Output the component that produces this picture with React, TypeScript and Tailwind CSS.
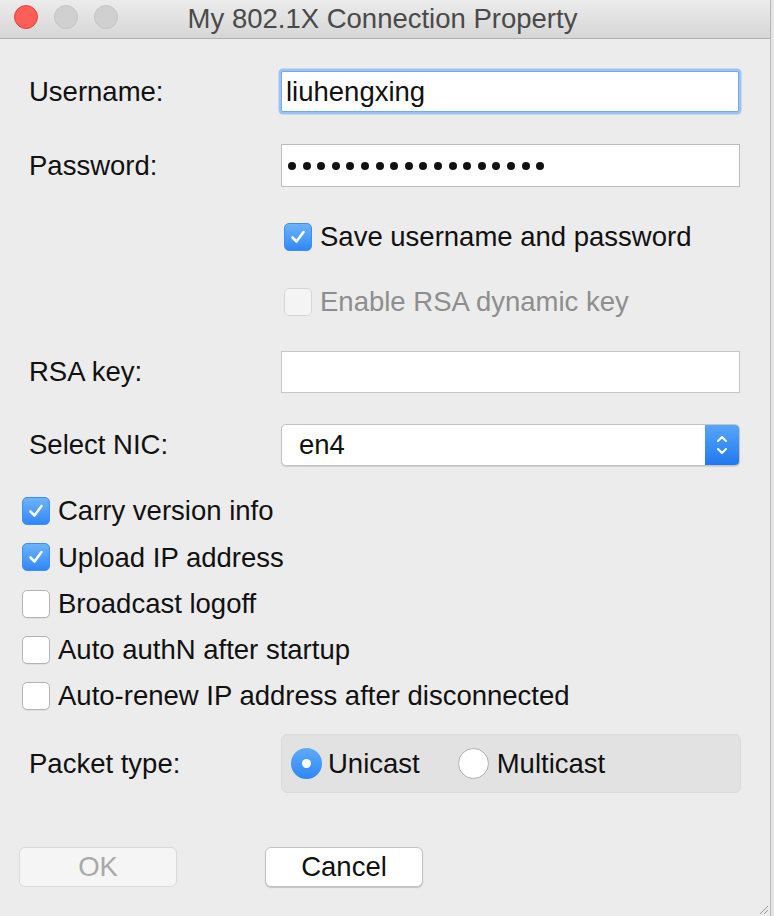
import React from "react";

const font = { fontFamily: '"Liberation Sans", Arial, Helvetica, sans-serif' };

function Check({ checked, disabled }: { checked?: boolean; disabled?: boolean }) {
  if (checked) {
    return (
      <div className="flex h-[28px] w-[28px] shrink-0 items-center justify-center rounded-[5px] bg-gradient-to-b from-[#6db3fb] to-[#2f88f5] border border-[#3a8ff0]">
        <svg width="18" height="18" viewBox="0 0 18 18">
          <path d="M3.5 9.5 L7.5 13.5 L14.5 4" fill="none" stroke="white" strokeWidth="2.6" strokeLinecap="round" strokeLinejoin="round" />
        </svg>
      </div>
    );
  }
  if (disabled) {
    return <div className="h-[28px] w-[28px] shrink-0 rounded-[5px] border border-[#d6d6d6] bg-[#f4f4f4]" />;
  }
  return <div className="h-[28px] w-[28px] shrink-0 rounded-[5px] border border-[#b3b3b3] bg-white shadow-[0_1px_0_rgba(0,0,0,0.05)]" />;
}

function CheckRow({ label, checked }: { label: string; checked?: boolean }) {
  return (
    <div className="flex h-[28px] items-center gap-[8px] pl-[22px]">
      <Check checked={checked} />
      <span className="text-[27.5px] leading-none text-[#111]">{label}</span>
    </div>
  );
}

function Label({ children }: { children: React.ReactNode }) {
  return <div className="w-[281px] shrink-0 pl-[29px] text-[27.5px] leading-none text-[#111]">{children}</div>;
}

export default function App() {
  return (
    <div style={font} className="flex h-[916px] w-[774px] overflow-hidden bg-[#e6e6e6]">
      <div className="relative flex h-[916px] w-[771px] flex-col border-r border-[#b4b4b4] bg-[#ececec]">
        {/* Title bar */}
        <div className="relative flex h-[39px] shrink-0 items-center justify-center border-b border-[#b1b1b1] bg-gradient-to-b from-[#ececec] to-[#d6d6d6]">
          <div className="absolute left-[14px] top-[5px] flex gap-[16px]">
            <div className="h-[24px] w-[24px] rounded-full border border-[#e2463f] bg-[#fc5f57]" />
            <div className="h-[24px] w-[24px] rounded-full border border-[#c4c4c4] bg-[#d0d0d0]" />
            <div className="h-[24px] w-[24px] rounded-full border border-[#c4c4c4] bg-[#d0d0d0]" />
          </div>
          <span className="pr-[5px] text-[27.5px] leading-none text-[#4a4a4a]">My 802.1X Connection Property</span>
        </div>

        {/* Username */}
        <div className="mt-[32px] flex h-[41px] items-center">
          <Label>Username:</Label>
          <div className="flex h-[41px] w-[458px] items-center rounded-[2px] border border-[#78a9e6] bg-white pl-[4px] shadow-[0_0_0_2.5px_#9cc3f1]">
            <span className="text-[27.5px] leading-none text-[#111]">liuhengxing</span>
          </div>
        </div>

        {/* Password */}
        <div className="mt-[32px] flex h-[43px] items-center">
          <Label>Password:</Label>
          <div className="flex h-[43px] w-[459px] items-center gap-[6.6px] border border-[#bcbcbc] bg-white pl-[6px]">
            {Array.from({ length: 18 }).map((_, i) => (
              <span key={i} className="h-[8px] w-[8px] rounded-full bg-[#111]" />
            ))}
          </div>
        </div>

        {/* Save */}
        <div className="mt-[36px] flex h-[28px] items-center gap-[8px] pl-[284px]">
          <Check checked />
          <span className="text-[27.5px] leading-none text-[#111]">Save username and password</span>
        </div>

        {/* Enable RSA */}
        <div className="mt-[37px] flex h-[28px] items-center gap-[8px] pl-[284px]">
          <Check disabled />
          <span className="text-[27.5px] leading-none text-[#8e8e8e]">Enable RSA dynamic key</span>
        </div>

        {/* RSA key */}
        <div className="mt-[35px] flex h-[42px] items-center">
          <Label>RSA key:</Label>
          <div className="h-[42px] w-[459px] border border-[#c6c6c6] bg-white" />
        </div>

        {/* Select NIC */}
        <div className="mt-[31px] flex h-[42px] items-center">
          <Label>Select NIC:</Label>
          <div className="flex h-[42px] w-[459px] overflow-hidden rounded-[5px] border border-[#c3c3c3] bg-white shadow-[0_1px_1px_rgba(0,0,0,0.12)]">
            <div className="flex flex-1 items-center pl-[17px]">
              <span className="text-[27.5px] leading-none text-[#111]">en4</span>
            </div>
            <div className="flex w-[34px] items-center justify-center bg-gradient-to-b from-[#57a6fa] to-[#1f78ef]">
              <svg width="14" height="26" viewBox="0 0 14 26">
                <path d="M3 9 L7 5 L11 9" fill="none" stroke="white" strokeWidth="2" strokeLinecap="round" strokeLinejoin="round" />
                <path d="M3 17 L7 21 L11 17" fill="none" stroke="white" strokeWidth="2" strokeLinecap="round" strokeLinejoin="round" />
              </svg>
            </div>
          </div>
        </div>

        {/* Check list */}
        <div className="mt-[31px] flex flex-col gap-[18.25px]">
          <CheckRow label="Carry version info" checked />
          <CheckRow label="Upload IP address" checked />
          <CheckRow label="Broadcast logoff" />
          <CheckRow label="Auto authN after startup" />
          <CheckRow label="Auto-renew IP address after disconnected" />
        </div>

        {/* Packet type */}
        <div className="mt-[24px] flex h-[59px] items-center">
          <Label>Packet type:</Label>
          <div className="flex h-[59px] w-[460px] items-center rounded-[6px] border border-[#dadada] bg-[#e2e2e2] pl-[9px]">
            <div className="flex items-center gap-[6px]">
              <div className="flex h-[31px] w-[31px] items-center justify-center rounded-full bg-gradient-to-b from-[#5eaafb] to-[#2d87f5]">
                <div className="h-[9px] w-[9px] rounded-full bg-white" />
              </div>
              <span className="text-[27.5px] leading-none text-[#111]">Unicast</span>
            </div>
            <div className="ml-[38px] flex items-center gap-[8px]">
              <div className="h-[31px] w-[31px] rounded-full border border-[#b0b0b0] bg-white" />
              <span className="text-[27.5px] leading-none text-[#111]">Multicast</span>
            </div>
          </div>
        </div>

        {/* Buttons */}
        <div className="mt-[54px] flex h-[40px] items-center pl-[19px]">
          <div className="flex h-[40px] w-[158px] items-center justify-center rounded-[6px] border border-[#d9d9d9] bg-[#f5f5f5]">
            <span className="text-[27.5px] leading-none text-[#a9a9a9]">OK</span>
          </div>
          <div className="ml-[88px] flex h-[40px] w-[158px] items-center justify-center rounded-[6px] border border-[#c2c2c2] bg-white shadow-[0_1px_1px_rgba(0,0,0,0.18)]">
            <span className="text-[27.5px] leading-none text-[#111]">Cancel</span>
          </div>
        </div>

        {/* resize grip */}
        <svg className="absolute bottom-[1px] right-[1px]" width="12" height="12" viewBox="0 0 12 12">
          <path d="M11 3 L3 11 M11 7 L7 11" stroke="#9a9a9a" strokeWidth="1" />
        </svg>
      </div>
    </div>
  );
}
